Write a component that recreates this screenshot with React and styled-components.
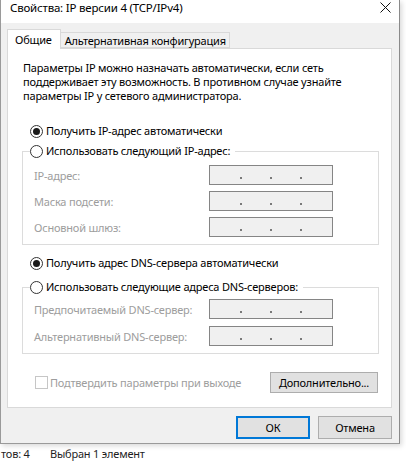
import React from "react";
import styled, { createGlobalStyle } from "styled-components";

const Global = createGlobalStyle`
  html, body { margin: 0; padding: 0; background: #ffffff; }
  body {
    font-family: "Noto Sans", "Segoe UI", Arial, sans-serif;
    font-size: 11px;
    letter-spacing: -0.2px;
    color: #000;
  }
  * { box-sizing: border-box; }
`;

const Page = styled.div`
  width: 406px;
  height: 461px;
  display: flex;
  flex-direction: column;
  overflow: hidden;
  background: #ffffff;
`;

const Window = styled.div`
  width: 400px;
  height: 444px;
  display: flex;
  flex-direction: column;
  background: #f0f0f0;
  border-left: 1px solid #9a9a9a;
  border-right: 1px solid #8a8a8a;
  border-bottom: 1px solid #9a9a9a;
  box-shadow: 2px 2px 5px rgba(0, 0, 0, 0.15);
  flex-shrink: 0;
`;

const TitleBar = styled.div`
  height: 23px;
  background: #ffffff;
  display: flex;
  align-items: flex-start;
  justify-content: space-between;
  padding: 0 8px 0 9px;
`;

const Title = styled.div`
  font-size: 11.5px;
  line-height: 16px;
  color: #000;
`;

const Close = styled.svg`
  width: 11px;
  height: 11px;
  margin-top: 2px;
`;

const Body = styled.div`
  display: flex;
  flex-direction: column;
  padding: 6px 7px 0 6px;
`;

const Tabs = styled.div`
  display: flex;
  align-items: flex-end;
  height: 19px;
`;

const Tab = styled.div`
  height: ${(p) => (p.$active ? "20px" : "16px")};
  margin-bottom: ${(p) => (p.$active ? "-1px" : "0")};
  background: ${(p) => (p.$active ? "#ffffff" : "#f0f0f0")};
  border: 1px solid #d9d9d9;
  border-bottom: ${(p) => (p.$active ? "none" : "1px solid #d9d9d9")};
  border-left: ${(p) => (p.$active ? "1px solid #d9d9d9" : "none")};
  padding: ${(p) => (p.$active ? "2px 8px 0 7px" : "0 3px 0 4px")};
  line-height: 15px;
  position: relative;
  z-index: ${(p) => (p.$active ? 2 : 1)};
  white-space: nowrap;
`;

const Panel = styled.div`
  height: 360px;
  background: #ffffff;
  border: 1px solid #d9d9d9;
  display: flex;
  flex-direction: column;
  padding: 12px 12px 0 0;
`;

const Paragraph = styled.p`
  margin: 0 0 0 15px;
  line-height: 14px;
`;

const RadioRow = styled.label`
  display: flex;
  align-items: center;
  gap: 3px;
  height: 16px;
  margin-left: ${(p) => p.$indent || "22px"};
  margin-top: ${(p) => p.$top || "0"};
  line-height: 16px;
  white-space: nowrap;
`;

const RadioCircle = styled.span`
  width: 13px;
  height: 13px;
  border-radius: 50%;
  border: 1px solid #333333;
  display: flex;
  align-items: center;
  justify-content: center;
  flex-shrink: 0;
  background: #ffffff;
  &::after {
    content: "";
    width: 7px;
    height: 7px;
    border-radius: 50%;
    background: #1a1a1a;
    display: ${(p) => (p.$checked ? "block" : "none")};
  }
`;

const Group = styled.fieldset`
  margin: ${(p) => p.$top || "4px"} 0 0 14px;
  padding: 0 0 ${(p) => p.$bottom || "7px"} 11px;
  border: 1px solid #dcdcdc;
  min-width: 0;
`;

const Legend = styled.legend`
  padding: 0 5px 0 0;
  margin-left: -4px;
`;

const Fields = styled.div`
  display: grid;
  grid-template-columns: 175px 124px;
  row-gap: ${(p) => p.$gap || "6px"};
  margin-top: ${(p) => p.$top || "6px"};
  align-items: center;
`;

const FieldLabel = styled.span`
  color: #9d9d9d;
  white-space: nowrap;
`;

const IpBox = styled.div`
  height: 20px;
  background: #f0f0f0;
  border: 1px solid #858585;
  display: grid;
  grid-template-columns: 32px 30px 30px 30px;
  align-items: end;
  padding-bottom: 5px;
`;

const Dot = styled.span`
  justify-self: end;
  width: 2px;
  height: 2px;
  background: #7a7a7a;
`;

const BottomRow = styled.div`
  display: flex;
  align-items: center;
  justify-content: space-between;
  margin: 18px 1px 0 27px;
`;

const CheckLabel = styled.label`
  display: flex;
  align-items: center;
  gap: 2px;
  color: #9d9d9d;
`;

const CheckBox = styled.span`
  width: 13px;
  height: 13px;
  border: 1px solid #c6c6c6;
  background: #ffffff;
`;

const Button = styled.button`
  font-family: inherit;
  font-size: 11px;
  letter-spacing: -0.2px;
  color: #000;
  background: #e1e1e1;
  border: ${(p) => (p.$default ? "2px solid #0078d7" : "1px solid #adadad")};
  width: ${(p) => p.$w || "74px"};
  height: ${(p) => p.$h || "23px"};
  padding: 0;
  line-height: 1;
`;

const Footer = styled.div`
  display: flex;
  justify-content: flex-end;
  gap: 8px;
  margin-top: 8px;
`;

const StatusBar = styled.div`
  display: flex;
  height: 17px;
  align-items: center;
  color: #1e1e1e;
  padding-top: 1px;
`;

const StatusItem = styled.span`
  width: ${(p) => p.$w || "auto"};
  margin-left: ${(p) => p.$ml || "0"};
  white-space: nowrap;
`;

function Ip() {
  return (
    <IpBox>
      <Dot />
      <Dot />
      <Dot />
      <span />
    </IpBox>
  );
}

export default function App() {
  return (
    <>
      <Global />
      <Page>
        <Window>
          <TitleBar>
            <Title>Свойства: IP версии 4 (TCP/IPv4)</Title>
            <Close viewBox="0 0 11 11">
              <path d="M0.5 0.5 L10.5 10.5 M10.5 0.5 L0.5 10.5" stroke="#111" strokeWidth="1" />
            </Close>
          </TitleBar>
          <Body>
            <Tabs>
              <Tab $active>Общие</Tab>
              <Tab>Альтернативная конфигурация</Tab>
            </Tabs>
            <Panel>
              <Paragraph>
                Параметры IP можно назначать автоматически, если сеть
                поддерживает эту возможность. В противном случае узнайте
                параметры IP у сетевого администратора.
              </Paragraph>
              <RadioRow $top="20px">
                <RadioCircle $checked />
                Получить IP-адрес автоматически
              </RadioRow>
              <Group $top="4px" $bottom="7px">
                <Legend>
                  <RadioRow $indent="0">
                    <RadioCircle />
                    Использовать следующий IP-адрес:
                  </RadioRow>
                </Legend>
                <Fields $top="6px" $gap="6px">
                  <FieldLabel>IP-адрес:</FieldLabel>
                  <Ip />
                  <FieldLabel>Маска подсети:</FieldLabel>
                  <Ip />
                  <FieldLabel>Основной шлюз:</FieldLabel>
                  <Ip />
                </Fields>
              </Group>
              <RadioRow $top="10px">
                <RadioCircle $checked />
                Получить адрес DNS-сервера автоматически
              </RadioRow>
              <Group $top="8px" $bottom="7px">
                <Legend>
                  <RadioRow $indent="0">
                    <RadioCircle />
                    Использовать следующие адреса DNS-серверов:
                  </RadioRow>
                </Legend>
                <Fields $top="4px" $gap="7px">
                  <FieldLabel>Предпочитаемый DNS-сервер:</FieldLabel>
                  <Ip />
                  <FieldLabel>Альтернативный DNS-сервер:</FieldLabel>
                  <Ip />
                </Fields>
              </Group>
              <BottomRow>
                <CheckLabel>
                  <CheckBox />
                  Подтвердить параметры при выходе
                </CheckLabel>
                <Button $w="108px" $h="21px">Дополнительно...</Button>
              </BottomRow>
            </Panel>
            <Footer>
              <Button $default>ОК</Button>
              <Button>Отмена</Button>
            </Footer>
          </Body>
        </Window>
        <StatusBar>
          <StatusItem $ml="1px" $w="49px">тов: 4</StatusItem>
          <StatusItem>Выбран 1 элемент</StatusItem>
        </StatusBar>
      </Page>
    </>
  );
}
